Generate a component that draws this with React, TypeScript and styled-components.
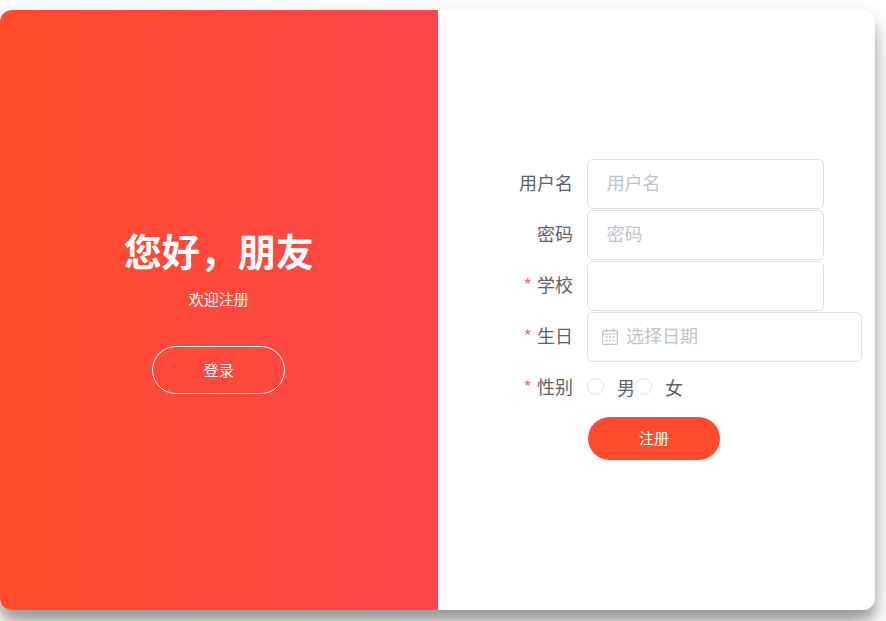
import styled, { createGlobalStyle } from 'styled-components';

const FONT = `"Noto Sans CJK SC", "Liberation Sans", sans-serif`;

const GlobalStyle = createGlobalStyle`
    html, body {
        margin: 0;
        padding: 0;
        background: #fff;
        overflow: hidden;
    }
    * {
        box-sizing: border-box;
    }
`;

interface FieldProps {
    label: string;
    required?: boolean;
    children: React.ReactNode;
}

const Field: React.FC<FieldProps> = ({ label, required, children }) => (
    <StyledRow>
        <StyledLabel>
            {required && <StyledStar>*</StyledStar>}
            {label}
        </StyledLabel>
        {children}
    </StyledRow>
);

const CalendarIcon = () => (
    <svg width="16" height="17" viewBox="0 0 16 17" fill="none" stroke="#c0c4cc" strokeWidth="1.2">
        <rect x="0.6" y="2.6" width="14.8" height="13.8" rx="1.2" />
        <path d="M1 6h14M4.5 0.5v3.5M11.5 0.5v3.5" />
        <path d="M3.5 9h2M7 9h2M10.5 9h2M3.5 12.5h2M7 12.5h2M10.5 12.5h2" strokeWidth="1.4" />
    </svg>
);

const App: React.FC = () => {
    return (
        <StyledPage>
            <GlobalStyle />
            <StyledCard>
                <StyledIntro>
                    <StyledTitle>您好，朋友</StyledTitle>
                    <StyledSubtitle>欢迎注册</StyledSubtitle>
                    <StyledGhostButton type="button">登录</StyledGhostButton>
                </StyledIntro>
                <StyledFormPanel>
                    <StyledForm>
                        <Field label="用户名">
                            <StyledInput placeholder="用户名" />
                        </Field>
                        <Field label="密码">
                            <StyledInput type="password" placeholder="密码" />
                        </Field>
                        <Field label="学校" required>
                            <StyledInput />
                        </Field>
                        <Field label="生日" required>
                            <StyledDateBox>
                                <CalendarIcon />
                                <StyledDateText placeholder="选择日期" />
                            </StyledDateBox>
                        </Field>
                        <Field label="性别" required>
                            <StyledRadioGroup>
                                <StyledRadio>
                                    <StyledCircle />
                                    男
                                </StyledRadio>
                                <StyledRadio>
                                    <StyledCircle />
                                    女
                                </StyledRadio>
                            </StyledRadioGroup>
                        </Field>
                        <StyledSubmit type="button">注册</StyledSubmit>
                    </StyledForm>
                </StyledFormPanel>
            </StyledCard>
        </StyledPage>
    );
};

export default App;

const StyledPage = styled.div`
    width: 886px;
    height: 621px;
    padding-top: 10px;
    font-family: ${FONT};
`;

const StyledCard = styled.div`
    display: flex;
    width: 875px;
    height: 600px;
    background: #fff;
    border-radius: 12px;
    overflow: hidden;
    box-shadow: 0 14px 28px rgba(0, 0, 0, 0.25), 0 10px 10px rgba(0, 0, 0, 0.22);
`;

const StyledIntro = styled.div`
    display: flex;
    flex-direction: column;
    align-items: center;
    justify-content: center;
    width: 437.5px;
    padding-bottom: 1px;
    color: #fff;
    background: linear-gradient(to right, #ff4b2b, #ff416c) 0 0 / 875px 100% no-repeat;
`;

const StyledTitle = styled.h1`
    margin: 0;
    font-size: 38px;
    line-height: 50px;
    font-weight: 700;
`;

const StyledSubtitle = styled.p`
    margin: 14px 0 0;
    font-size: 15px;
    line-height: 20px;
`;

const StyledGhostButton = styled.button`
    width: 133px;
    height: 48px;
    margin-top: 37px;
    padding: 0 0 2px;
    border: 1px solid #fff;
    border-radius: 24px;
    background: transparent;
    color: #fff;
    font-family: inherit;
    font-size: 15px;
`;

const StyledFormPanel = styled.div`
    flex: 1;
    display: flex;
    flex-direction: column;
    justify-content: center;
`;

const StyledForm = styled.form`
    display: flex;
    flex-direction: column;
    gap: 1px;
    margin-top: -2px;
`;

const StyledRow = styled.div`
    display: flex;
    align-items: center;
    min-height: 50px;
    font-size: 18px;
    color: #606266;
`;

const StyledLabel = styled.label`
    width: 149.5px;
    padding: 0 14px 4px 0;
    text-align: right;
    flex-shrink: 0;
    font-size: 18px;
    line-height: 24px;
`;

const StyledStar = styled.span`
    margin-right: 5px;
    color: #f56c6c;
`;

const StyledInput = styled.input`
    width: 237px;
    height: 50px;
    padding: 0 18.5px 4px;
    border: 1px solid #dcdfe6;
    border-radius: 6px;
    outline: none;
    font-family: inherit;
    font-size: 18px;
    color: #606266;

    &::placeholder {
        color: #c0c4cc;
        opacity: 1;
    }
`;

const StyledDateBox = styled.div`
    display: flex;
    align-items: center;
    gap: 8px;
    width: 275px;
    height: 50px;
    padding-left: 14px;
    border: 1px solid #dcdfe6;
    border-radius: 6px;
`;

const StyledDateText = styled.input`
    flex: 1;
    min-width: 0;
    padding: 0 0 4px;
    border: none;
    outline: none;
    font-family: inherit;
    font-size: 18px;

    &::placeholder {
        color: #c0c4cc;
        opacity: 1;
    }
`;

const StyledRadioGroup = styled.div`
    display: flex;
    align-items: center;
    margin-bottom: 2px;
`;

const StyledRadio = styled.label`
    display: flex;
    align-items: center;
    gap: 13px;
    font-size: 18px;
    line-height: 24px;
    color: #606266;
`;

const StyledCircle = styled.span`
    width: 17px;
    height: 17px;
    border: 1px solid #dcdfe6;
    border-radius: 50%;
    background: #fff;
`;

const StyledSubmit = styled.button`
    width: 132px;
    height: 43px;
    margin: 3px 0 0 150.5px;
    padding: 0 0 2px;
    border: none;
    border-radius: 22px;
    background: #ff4b2b;
    color: #fff;
    font-family: inherit;
    font-size: 15px;
`;
